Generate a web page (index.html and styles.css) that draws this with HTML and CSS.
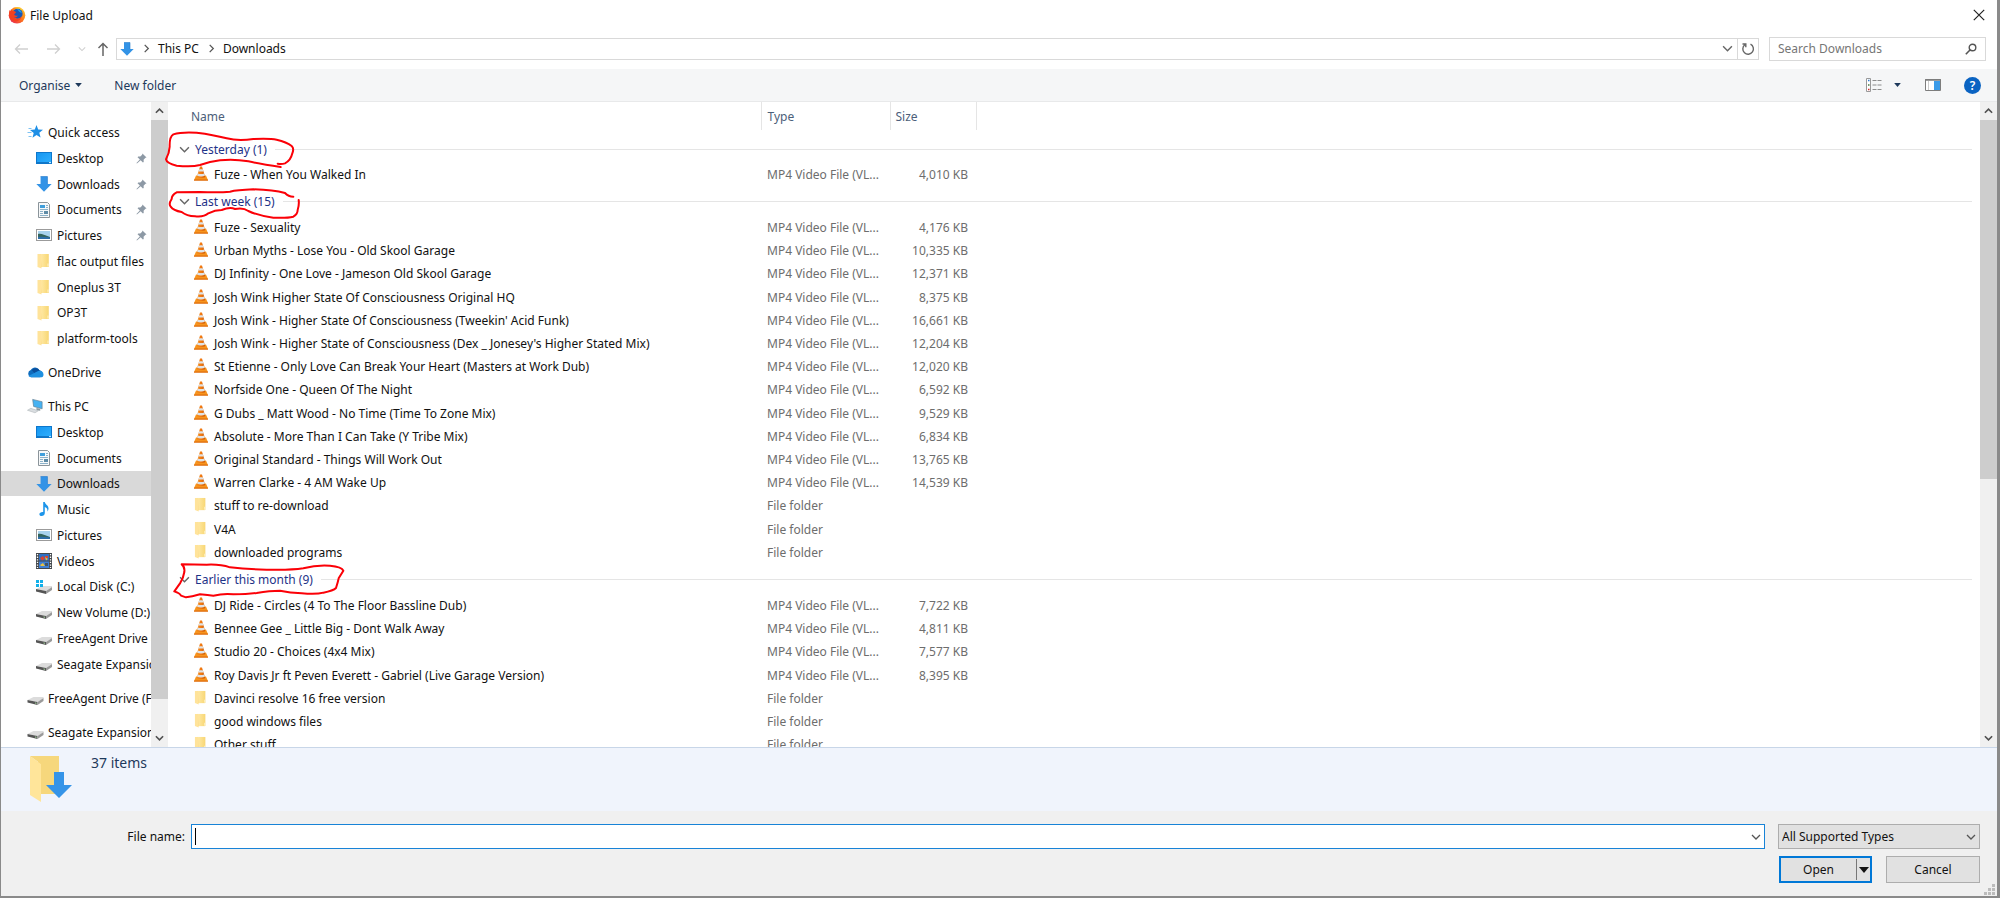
FILE: index.html
```html
<!DOCTYPE html>
<html lang="en">
<head>
    <meta charset="UTF-8">
    <title>File Upload</title>
    <link rel="stylesheet" href="styles.css">
</head>
<body>
    <!-- shared icons -->
    <svg class="sprite" width="0" height="0" aria-hidden="true">
        <defs>
            <linearGradient id="gFolder" x1="0" y1="0" x2="1" y2="0"><stop offset="0" stop-color="#ffe9a6"/><stop offset="1" stop-color="#f8d775"/></linearGradient>
            <linearGradient id="gCone" x1="0" y1="0" x2="1" y2="0"><stop offset="0" stop-color="#f08a1c"/><stop offset=".5" stop-color="#f47a10"/><stop offset="1" stop-color="#c95a08"/></linearGradient>
            <linearGradient id="gDesk" x1="0" y1="0" x2="1" y2="1"><stop offset="0" stop-color="#1595f0"/><stop offset="1" stop-color="#2fb0ff"/></linearGradient>
            <linearGradient id="gFox" x1="1" y1="0" x2="0" y2="1"><stop offset="0" stop-color="#ffd52e"/><stop offset=".45" stop-color="#ff7a1a"/><stop offset="1" stop-color="#e3175e"/></linearGradient>
        </defs>
        <symbol id="i-firefox" viewBox="0 0 18 18">
            <circle cx="9" cy="9.300" r="8.300" fill="url(#gFox)"/>
            <path d="M7 1.500c3-1 6.500.2 8 3.200-1.500-1-2.500-.8-3-.4z" fill="#ffcf2b"/>
            <circle cx="9.600" cy="7.800" r="5" fill="#1d57b5"/>
            <path d="M9 3c2.500.2 4.500 1.800 4.800 4.300L11 5.500z" fill="#21a0e8"/>
            <path d="M1.500 4l1.200 1.200 1-1.700.8 1.600c1.500-.4 3 .2 3.500 1.300L6.200 8.200c.2 1.500 1.800 1.700 3.600 1.200-.7 1.700-2.300 2.300-3.800 2 1.500 2 5.500 2 7.500-1.200-.3 3.500-4 6-7.500 5C2.200 14 0 10 1.500 4z" fill="#f5411f"/>
        </symbol>
        <symbol id="i-down" viewBox="0 0 14 14"><path d="M4 .5h6V7h3.700L7 13.700.3 7H4z" fill="#3393e6"/><path d="M4 .5h6V7" fill="none" stroke="#2a7dcb" stroke-width=".6"/></symbol>
        <symbol id="i-chev-down" viewBox="0 0 10 10"><path d="M1 3l4 4 4-4" fill="none" stroke="currentColor" stroke-width="1.300"/></symbol>
        <symbol id="i-chev-up" viewBox="0 0 10 10"><path d="M1 7l4-4 4 4" fill="none" stroke="currentColor" stroke-width="1.800"/></symbol>
        <symbol id="i-chev-right" viewBox="0 0 10 10"><path d="M3 1l4 4-4 4" fill="none" stroke="currentColor" stroke-width="1.400"/></symbol>
        <symbol id="i-tri" viewBox="0 0 10 6"><path d="M0 0h10L5 6z" fill="currentColor"/></symbol>
        <symbol id="i-star" viewBox="0 0 16 16"><path d="M9 1l1.700 4.500 4.800.2-3.700 3 1.300 4.800L9 11l-4 2.700 1.200-4.800L2.500 6l4.800-.4z" fill="#1e8fe6"/><path d="M1 4.500h3M0 8.500h4M1 12.500h3" stroke="#7cc2f3" stroke-width="1"/></symbol>
        <symbol id="i-desktop" viewBox="0 0 16 16"><rect x=".5" y="2.500" width="15" height="11" fill="url(#gDesk)" stroke="#0d77cc"/><path d="M1 12.600h12" stroke="#0a64b4" stroke-width=".8"/><path d="M13 12.600h2" stroke="#fff" stroke-width=".8"/></symbol>
        <symbol id="i-doc" viewBox="0 0 16 16"><path d="M2.500.5h9l2 2v13h-11z" fill="#f6f8f9" stroke="#8b949a"/><path d="M4 3h5v3H4z" fill="#3f9edb"/><path d="M10 3.500h2M10 5.500h2M4 7.500h8M4 9.500h3M4 11.500h3M4 13.500h8" stroke="#8bb1c9"/><path d="M8 9h4v3H8z" fill="#5d8ba6"/></symbol>
        <symbol id="i-pic" viewBox="0 0 16 16"><rect x=".5" y="2.500" width="15" height="11" fill="#fff" stroke="#9b9b9b"/><rect x="2" y="4" width="12" height="8" fill="#a9d3ee"/><path d="M2 7c3-1 6 1 12 3v2H2z" fill="#35655d"/><path d="M2 10c4-.6 8 0 12 .6V12H2z" fill="#2d6da8"/></symbol>
        <symbol id="i-folder" viewBox="1 0 15 16"><path d="M4 1h9v13H4z" fill="#f3cd66"/><path d="M5 1h8v13H6z" fill="url(#gFolder)"/><path d="M2 1h3l1 1.500v13L2 14z" fill="#ffe39a"/><path d="M12 10.500h1v3h-1z" fill="#fff4cc"/></symbol>
        <symbol id="i-cloud" viewBox="0 0 18 12"><path d="M4.500 11.500a4 4 0 0 1-.5-7.700A5.200 5.200 0 0 1 13 4a4 4 0 0 1 1 7.500z" fill="#0f6cbd"/><path d="M5 4a5 5 0 0 1 8.300.3L8.500 8z" fill="#0a4f9c"/><path d="M1.500 10.300L11.800 5a4 4 0 0 1 5.700 3.800 2.800 2.800 0 0 1-2.800 2.700H4.200a4 4 0 0 1-2.700-1.200z" fill="#1f90e0"/></symbol>
        <symbol id="i-pc" viewBox="0 0 18 16"><path d="M6 1l10 2.500V11L7 8.500z" fill="#46b2f2" stroke="#607d90" stroke-width=".7"/><path d="M10 10l4 1v2l-4-.6z" fill="#8d999f"/><path d="M.5 12.500L4 10.500l8 2.500-3.500 2.200z" fill="#d9dde0" stroke="#adb4b8" stroke-width=".6"/></symbol>
        <symbol id="i-music" viewBox="0 0 16 16"><path d="M7.200 1h1.600c.2 2.500 3.700 3 3.700 6.500 0 1.300-.6 2.300-1.200 3 .5-2.800-.8-4-2.500-4.600V12c0 1.800-1.500 3-3.200 3-1.400 0-2.200-.8-2.200-1.800C3.400 11.600 5.400 10.600 7.200 11z" fill="#1d95ea"/></symbol>
        <symbol id="i-video" viewBox="0 0 16 16"><path d="M0 0h16v16H0z" fill="#43484d"/><path d="M3 1h10v6.500H3z" fill="#2f6fc4"/><path d="M3 8.500h10V15H3z" fill="#3d7fd6"/><path d="M1.500 1v14M14.500 1v14" stroke="#fff" stroke-width="1.300" stroke-dasharray="1.300 1.300"/><path d="M4 5l3-2 2 3-3 1.500zM9 3h3v2H9z" fill="#d9442f"/><path d="M4 12l3-2 2 3H5zM9 4l3 2-2 1.500z" fill="#e7c243"/><path d="M9 10h3v3H9z" fill="#3f5568"/></symbol>
        <symbol id="i-drive" viewBox="0 0 16 16"><path d="M0 10l6-3h10v1l-6 4z" fill="#dcdcdc"/><path d="M0 10l10 2v3L0 12.500z" fill="#555"/><path d="M10 12l6-4v3l-6 4z" fill="#9a9a9a"/><path d="M7.500 13l1.500.3" stroke="#b9f7b0" stroke-width=".8"/></symbol>
        <symbol id="i-windrive" viewBox="0 0 16 16"><path d="M0 10l6-3h10v1l-6 4z" fill="#dcdcdc"/><path d="M0 10l10 2v3L0 12.500z" fill="#555"/><path d="M10 12l6-4v3l-6 4z" fill="#9a9a9a"/><path d="M0 1h3v3H0zM4 1h3v3H4zM0 5h3v3H0zM4 5h3v3H4z" fill="#12b0ea"/></symbol>
        <symbol id="i-pin" viewBox="0 0 12 12"><path d="M7 .5L11.500 5l-1.200.3-2 2.100.1 2.300-.9.6-2.400-2.400L1 11.500.5 11l3.700-4-2.500-2.500.7-.8 2.300.1 2-2z" fill="#8d99a5"/></symbol>
        <symbol id="i-cone" viewBox="0 0 14 15"><path d="M2 9.500h10l2 4.700H0z" fill="#f7941d"/><path d="M0 13.500h14v1.200H0z" fill="#dd6a0c"/><path d="M6 .5h2L11.200 11c-1.500 1.300-6.900 1.300-8.400 0z" fill="url(#gCone)"/><path d="M5.200 3.200h3.600l.7 2.300h-5z" fill="#dfe3e6"/><path d="M3.900 7.500c2 .7 4.200.7 6.200 0l.7 2.200c-2 1-5.600 1-7.600 0z" fill="#dfe3e6"/></symbol>
    </svg>

    <div class="dialog">
        <header class="titlebar">
            <svg class="logo"><use href="#i-firefox"/></svg>
            <span class="title">File Upload</span>
            <button class="plain close" aria-label="Close"><svg viewBox="0 0 12 12" width="12" height="12"><path d="M.8.8l10.400 10.400M11.200.8L.8 11.200" stroke="#222" stroke-width="1.200"/></svg></button>
        </header>

        <nav class="navbar">
            <div class="arrows">
                <button class="plain off" aria-label="Back"><svg viewBox="0 0 14 14" width="14" height="14"><path d="M14 7H1.500M6 2.500L1.500 7 6 11.500" fill="none" stroke="currentColor" stroke-width="1.300"/></svg></button>
                <button class="plain off" aria-label="Forward"><svg viewBox="0 0 14 14" width="14" height="14"><path d="M0 7h12.500M8 2.500L12.500 7 8 11.500" fill="none" stroke="currentColor" stroke-width="1.300"/></svg></button>
                <button class="plain off" aria-label="Recent locations"><svg width="8" height="8"><use href="#i-chev-down"/></svg></button>
                <button class="plain" aria-label="Up"><svg viewBox="0 0 12 14" width="12" height="14"><path d="M6 14V1.500M1.500 6L6 1.500 10.500 6" fill="none" stroke="currentColor" stroke-width="1.500"/></svg></button>
            </div>
            <div class="address">
                <svg width="14" height="14"><use href="#i-down"/></svg>
                <svg class="sep" width="9" height="9"><use href="#i-chev-right"/></svg>
                <a href="#">This PC</a>
                <svg class="sep" width="9" height="9"><use href="#i-chev-right"/></svg>
                <a href="#">Downloads</a>
                <button class="plain history" aria-label="Previous locations"><svg width="11" height="11"><use href="#i-chev-down"/></svg></button>
                <button class="plain refresh" aria-label="Refresh"><svg viewBox="0 0 14 14" width="14" height="14"><path d="M9.500 2.200A5.300 5.300 0 1 1 3.800 2.800M1.500 2h3.300v3.300" fill="none" stroke="currentColor" stroke-width="1.400"/></svg></button>
            </div>
            <div class="search">
                <input type="text" placeholder="Search Downloads" aria-label="Search Downloads">
                <svg viewBox="0 0 12 12" width="12" height="12"><circle cx="7.500" cy="4.500" r="3.300" fill="none" stroke="#555" stroke-width="1.400"/><path d="M5 7L.8 11.200" stroke="#555" stroke-width="1.600"/></svg>
            </div>
        </nav>

        <div class="toolbar">
            <button class="plain">Organise <svg width="7" height="4"><use href="#i-tri"/></svg></button>
            <button class="plain">New folder</button>
            <div class="views">
                <button class="plain" aria-label="View"><svg viewBox="0 0 16 14" width="16" height="14"><path d="M.5.500h4v13h-4z" fill="#fff" stroke="#999"/><path d="M2 2.500h1.500" stroke="#2c7bd0" stroke-width="1.500"/><path d="M2 7h1.500" stroke="#467a3c" stroke-width="1.500"/><path d="M2 11.500h1.500" stroke="#d02c2c" stroke-width="1.500"/><path d="M6.500 2.500h4M11.500 2.500h4M6.500 7h4M11.500 7h4M6.500 11.500h4M11.500 11.500h4" stroke="#8c8c8c"/></svg></button>
                <button class="plain" aria-label="More views"><svg width="7" height="4"><use href="#i-tri"/></svg></button>
                <button class="plain" aria-label="Preview pane"><svg viewBox="0 0 16 12" width="16" height="12"><path d="M.5.500h15v11H.500z" fill="#fff" stroke="#7d7d7d"/><path d="M0 1h16" stroke="#7d7d7d" stroke-width="1.500"/><path d="M9 2h6v9H9z" fill="#3c9be8"/><path d="M3.500 2v9" stroke="#ccc"/></svg></button>
                <button class="plain help" aria-label="Help">?</button>
            </div>
        </div>

        <main class="browser">
            <aside class="sidebar">
                <div class="tree">
                    <ul>
                        <li class="root"><svg><use href="#i-star"/></svg>Quick access</li>
                        <li><svg><use href="#i-desktop"/></svg>Desktop<svg class="pin"><use href="#i-pin"/></svg></li>
                        <li><svg><use href="#i-down"/></svg>Downloads<svg class="pin"><use href="#i-pin"/></svg></li>
                        <li><svg><use href="#i-doc"/></svg>Documents<svg class="pin"><use href="#i-pin"/></svg></li>
                        <li><svg><use href="#i-pic"/></svg>Pictures<svg class="pin"><use href="#i-pin"/></svg></li>
                        <li><svg><use href="#i-folder"/></svg>flac output files</li>
                        <li><svg><use href="#i-folder"/></svg>Oneplus 3T</li>
                        <li><svg><use href="#i-folder"/></svg>OP3T</li>
                        <li><svg><use href="#i-folder"/></svg>platform-tools</li>
                    </ul>
                    <ul>
                        <li class="root"><svg><use href="#i-cloud"/></svg>OneDrive</li>
                    </ul>
                    <ul>
                        <li class="root"><svg><use href="#i-pc"/></svg>This PC</li>
                        <li><svg><use href="#i-desktop"/></svg>Desktop</li>
                        <li><svg><use href="#i-doc"/></svg>Documents</li>
                        <li class="selected"><svg><use href="#i-down"/></svg>Downloads</li>
                        <li><svg><use href="#i-music"/></svg>Music</li>
                        <li><svg><use href="#i-pic"/></svg>Pictures</li>
                        <li><svg><use href="#i-video"/></svg>Videos</li>
                        <li><svg><use href="#i-windrive"/></svg>Local Disk (C:)</li>
                        <li><svg><use href="#i-drive"/></svg>New Volume (D:)</li>
                        <li><svg><use href="#i-drive"/></svg>FreeAgent Drive (F:)</li>
                        <li><svg><use href="#i-drive"/></svg>Seagate Expansion Drive (E:)</li>
                    </ul>
                    <ul>
                        <li class="root"><svg><use href="#i-drive"/></svg>FreeAgent Drive (F:)</li>
                    </ul>
                    <ul>
                        <li class="root"><svg><use href="#i-drive"/></svg>Seagate Expansion Drive (E:)</li>
                    </ul>
                </div>
                <div class="scrollbar">
                    <svg><use href="#i-chev-up"/></svg>
                    <div class="track"><div class="thumb thumb-tree"></div></div>
                    <svg class="flip"><use href="#i-chev-up"/></svg>
                </div>
            </aside>

            <section class="files">
                <div class="list">
                    <table>
                        <colgroup><col class="c-name"><col class="c-type"><col class="c-size"><col></colgroup>
                        <thead>
                            <tr><th>Name</th><th>Type</th><th>Size</th><th></th></tr>
                        </thead>
                        <tbody>
                            <tr class="group"><th colspan="4"><div><svg><use href="#i-chev-down"/></svg>Yesterday (1)</div></th></tr>
                            <tr><td><svg><use href="#i-cone"/></svg>Fuze - When You Walked In</td><td>MP4 Video File (VL...</td><td>4,010 KB</td></tr>
                        </tbody>
                        <tbody>
                            <tr class="group"><th colspan="4"><div><svg><use href="#i-chev-down"/></svg>Last week (15)</div></th></tr>
                            <tr><td><svg><use href="#i-cone"/></svg>Fuze - Sexuality</td><td>MP4 Video File (VL...</td><td>4,176 KB</td></tr>
                            <tr><td><svg><use href="#i-cone"/></svg>Urban Myths - Lose You - Old Skool Garage</td><td>MP4 Video File (VL...</td><td>10,335 KB</td></tr>
                            <tr><td><svg><use href="#i-cone"/></svg>DJ Infinity - One Love - Jameson Old Skool Garage</td><td>MP4 Video File (VL...</td><td>12,371 KB</td></tr>
                            <tr><td><svg><use href="#i-cone"/></svg>Josh Wink Higher State Of Consciousness Original HQ</td><td>MP4 Video File (VL...</td><td>8,375 KB</td></tr>
                            <tr><td><svg><use href="#i-cone"/></svg>Josh Wink - Higher State Of Consciousness (Tweekin' Acid Funk)</td><td>MP4 Video File (VL...</td><td>16,661 KB</td></tr>
                            <tr><td><svg><use href="#i-cone"/></svg>Josh Wink - Higher State of Consciousness (Dex _ Jonesey's Higher Stated Mix)</td><td>MP4 Video File (VL...</td><td>12,204 KB</td></tr>
                            <tr><td><svg><use href="#i-cone"/></svg>St Etienne - Only Love Can Break Your Heart (Masters at Work Dub)</td><td>MP4 Video File (VL...</td><td>12,020 KB</td></tr>
                            <tr><td><svg><use href="#i-cone"/></svg>Norfside One - Queen Of The Night</td><td>MP4 Video File (VL...</td><td>6,592 KB</td></tr>
                            <tr><td><svg><use href="#i-cone"/></svg>G Dubs _ Matt Wood - No Time (Time To Zone Mix)</td><td>MP4 Video File (VL...</td><td>9,529 KB</td></tr>
                            <tr><td><svg><use href="#i-cone"/></svg>Absolute - More Than I Can Take (Y Tribe Mix)</td><td>MP4 Video File (VL...</td><td>6,834 KB</td></tr>
                            <tr><td><svg><use href="#i-cone"/></svg>Original Standard - Things Will Work Out</td><td>MP4 Video File (VL...</td><td>13,765 KB</td></tr>
                            <tr><td><svg><use href="#i-cone"/></svg>Warren Clarke - 4 AM Wake Up</td><td>MP4 Video File (VL...</td><td>14,539 KB</td></tr>
                            <tr><td><svg><use href="#i-folder"/></svg>stuff to re-download</td><td>File folder</td><td></td></tr>
                            <tr><td><svg><use href="#i-folder"/></svg>V4A</td><td>File folder</td><td></td></tr>
                            <tr><td><svg><use href="#i-folder"/></svg>downloaded programs</td><td>File folder</td><td></td></tr>
                        </tbody>
                        <tbody>
                            <tr class="group"><th colspan="4"><div><svg><use href="#i-chev-down"/></svg>Earlier this month (9)</div></th></tr>
                            <tr><td><svg><use href="#i-cone"/></svg>DJ Ride - Circles (4 To The Floor Bassline Dub)</td><td>MP4 Video File (VL...</td><td>7,722 KB</td></tr>
                            <tr><td><svg><use href="#i-cone"/></svg>Bennee Gee _ Little Big - Dont Walk Away</td><td>MP4 Video File (VL...</td><td>4,811 KB</td></tr>
                            <tr><td><svg><use href="#i-cone"/></svg>Studio 20 - Choices (4x4 Mix)</td><td>MP4 Video File (VL...</td><td>7,577 KB</td></tr>
                            <tr><td><svg><use href="#i-cone"/></svg>Roy Davis Jr ft Peven Everett - Gabriel (Live Garage Version)</td><td>MP4 Video File (VL...</td><td>8,395 KB</td></tr>
                            <tr><td><svg><use href="#i-folder"/></svg>Davinci resolve 16 free version</td><td>File folder</td><td></td></tr>
                            <tr><td><svg><use href="#i-folder"/></svg>good windows files</td><td>File folder</td><td></td></tr>
                            <tr><td><svg><use href="#i-folder"/></svg>Other stuff</td><td>File folder</td><td></td></tr>
                        </tbody>
                    </table>
                </div>
                <div class="scrollbar">
                    <svg><use href="#i-chev-up"/></svg>
                    <div class="track"><div class="thumb thumb-list"></div></div>
                    <svg class="flip"><use href="#i-chev-up"/></svg>
                </div>
            </section>
        </main>

        <div class="details">
            <svg viewBox="0 0 42 48" width="42" height="48"><path d="M8 1h21v38H8z" fill="#f0cc68"/><path d="M29 1v38H11V9L0 1z" fill="#f6d77c"/><path d="M0 1l11 8v38L0 40z" fill="#ffe59a"/><path d="M24 17h10v13h8L29 43 16 30h8z" fill="#3594e8"/></svg>
            <span>37 items</span>
        </div>

        <form class="footer" onsubmit="return false">
            <label for="filename">File name:</label>
            <div class="filename">
                <input type="text" id="filename">
                <svg><use href="#i-chev-down"/></svg>
            </div>
            <div class="filetype">
                <select aria-label="File type"><option>All Supported Types</option></select>
                <svg><use href="#i-chev-down"/></svg>
            </div>
            <div class="buttons">
                <div class="split">
                    <button class="open">Open</button>
                    <button class="more" aria-label="Open options"><svg width="10" height="6"><use href="#i-tri"/></svg></button>
                </div>
                <button class="cancel">Cancel</button>
            </div>
        </form>
        <svg class="grip" viewBox="0 0 11 11" width="11" height="11"><path d="M8 0h3v3H8zM4 4h3v3H4zM8 4h3v3H8zM0 8h3v3H0zM4 8h3v3H4zM8 8h3v3H8z" fill="#bcbcbc"/></svg>

        <!-- red pen circles round the group names -->
        <svg class="pen" viewBox="0 0 1200 1860" width="400" height="620">
            <path d="M842 501Q780 492 745 484Q700 476 660 481Q630 485 600 495Q575 502 530 497Q500 490 498 478Q508 460 509 440Q508 410 520 403Q545 395 590 398Q640 404 680 415Q715 424 760 417Q810 415 830 419Q860 426 875 438Q883 445 877 460Q872 482 855 490Q845 493 833 491"/>
            <path d="M880 590Q865 590 855 579Q820 570 760 568Q710 570 690 575Q660 578 600 576L530 577Q515 585 515 597Q505 612 512 620Q520 632 545 636Q560 648 585 649Q612 652 625 640Q645 630 665 630Q690 620 705 627Q730 622 745 633Q775 647 820 653Q860 655 880 650Q893 642 893 630Q898 615 896 600"/>
            <path d="M545 1693Q555 1700 553 1716Q550 1735 540 1750L523 1774Q540 1780 543 1787L558 1792Q575 1790 600 1783Q625 1785 640 1787Q670 1780 700 1783Q740 1783 770 1779Q810 1772 840 1772Q870 1778 905 1780Q950 1784 970 1778Q1000 1772 1008 1764Q1014 1745 1016 1735L1030 1712Q1025 1700 990 1697Q950 1694 910 1705Q870 1711 800 1709Q740 1708 690 1702Q660 1692 620 1694Z"/>
        </svg>
    </div>
</body>
</html>
```
FILE: styles.css
```css
* { box-sizing: border-box; }
body { margin: 0; font-family: "Noto Sans", "Open Sans", sans-serif; font-size: 12px; color: #111; background-color: #fff; }
button, input, select { font: inherit; color: inherit; }
ul { list-style: none; margin: 0; padding: 0; }
svg { display: block; flex: none; }
.sprite { position: absolute; }
.plain { display: flex; align-items: center; border: 0; padding: 0; background: none; }

.dialog { position: relative; display: flex; flex-direction: column; height: 100vh; overflow: hidden; border: 1px solid #8a8a8a; border-width: 0 3px 2px 1px; }

.titlebar { display: flex; align-items: center; height: 30px; padding: 0 12px 0 7px; }
.logo { width: 18px; height: 18px; }
.title { margin-left: 4px; }
.close { margin-left: auto; }

.navbar { display: flex; align-items: center; gap: 10px; height: 39px; padding: 0 11px 2px 13px; }
.arrows { display: flex; align-items: center; gap: 17px; width: 92px; color: #666; }
.arrows .plain:nth-child(2) { margin-left: 2px; }
.arrows .plain:nth-child(4) { margin-left: -6px; }
.off { color: #cfcfcf; }
.address { display: flex; flex: 1; align-items: center; height: 22px; padding-left: 3px; border: 1px solid #d9d9d9; }
.address a { color: inherit; text-decoration: none; }
.sep { margin: 0 7px 0 8px; color: #555; }
.history { margin-left: auto; padding-right: 4px; color: #666; }
.refresh { height: 20px; padding: 0 3px; border-left: 1px solid #d9d9d9; color: #666; }
.search { display: flex; align-items: center; width: 217px; height: 24px; padding: 0 8px; border: 1px solid #d9d9d9; }
.search input { flex: 1; min-width: 0; border: 0; padding: 0; outline: 0; background: none; }
.search input::placeholder { color: #767676; opacity: 1; }

.toolbar { display: flex; align-items: center; gap: 32px; height: 33px; padding: 0 16px 0 18px; background-color: #f5f6f7; border-bottom: 1px solid #e8e9ea; color: #1e395b; }
.toolbar .plain { gap: 5px; }
.views { display: flex; align-items: center; margin-left: auto; }
.views .plain:nth-child(2) { margin-left: 12px; }
.views .plain:nth-child(3) { margin-left: 24px; }
.toolbar .help { justify-content: center; width: 17px; height: 17px; margin-left: 23px; border-radius: 50%; background-color: #0a63c2; color: #fff; font-weight: 600; }

.browser { display: flex; flex: 1; min-height: 0; }
.sidebar { display: flex; width: 167px; }
.tree { flex: 1; min-width: 0; overflow: hidden; padding-top: 17px; }
.tree ul { margin-bottom: 8px; }
.tree li { display: flex; align-items: center; gap: 5px; height: 26px; padding-left: 35px; white-space: nowrap; overflow: hidden; }
.tree li:nth-child(4n) { height: 25px; }
.tree li svg { width: 16px; height: 16px; }
.tree li.root { gap: 4px; padding-left: 26px; }
.tree li.root svg { width: 17px; }
.tree li .pin { width: 11px; height: 11px; margin: 0 4px 0 auto; }
.selected { background-color: #d9d9d9; }

.scrollbar { display: flex; flex-direction: column; width: 17px; background-color: #f0f0f0; color: #505050; }
.scrollbar > svg { width: 9px; height: 18px; margin: 0 auto; }
.track { flex: 1; }
.thumb { background-color: #cdcdcd; }
.thumb-tree { height: 95%; }
.thumb-list { height: 59%; }
.flip { transform: rotate(180deg); }

.files { display: flex; flex: 1; min-width: 0; }
.list { flex: 1; min-width: 0; overflow: hidden; padding: 0 8px 0 22px; }
table { width: 100%; table-layout: fixed; border-collapse: collapse; }
.c-name { width: 571px; }
.c-type { width: 129px; }
.c-size { width: 86px; }
th, td { padding: 0; font-weight: normal; text-align: left; white-space: nowrap; }
thead th { height: 28px; padding-left: 6px; border-right: 1px solid #e5e5e5; color: #4c607a; }
thead th:first-child { padding-left: 1px; }
thead th:last-child { border-right: 0; }
thead th:nth-child(3) { padding-left: 5px; }
tbody tr { height: 23px; }
tbody tr:nth-child(5n) { height: 24px; }
.group th { height: 30px; color: #1e3287; }
thead + tbody .group th { height: 33px; padding-top: 5px; }
.group div { display: flex; align-items: center; }
.group div::after { content: ""; flex: 1; height: 1px; margin-left: 8px; background-color: #e5e5e5; }
.group svg { width: 11px; height: 11px; margin: 0 5px 0 -11px; color: #666; }
td svg { float: left; width: 14px; height: 15px; margin: 0 6px 0 4px; }
td:nth-child(n+2) { padding-left: 6px; color: #6d6d6d; }
td:nth-child(3) { padding: 0 8px 0 0; text-align: right; }

.details { display: flex; gap: 19px; height: 64px; padding: 7px 0 0 29px; border-top: 1px solid #c8d6e8; background-color: #f0f4fc; color: #1e395b; font-size: 14px; line-height: 16px; }

.footer { display: grid; grid-template-columns: 185px 1fr 202px; gap: 7px 0; height: 85px; padding: 13px 17px 12px 0; background-color: #f0f0f0; align-content: start; }
.footer label { padding-right: 1px; text-align: right; line-height: 25px; }
.filename, .filetype { position: relative; }
.filename { margin: 0 13px 0 5px; }
.filename::before { content: ""; position: absolute; left: 4px; top: 4px; width: 1px; height: 17px; background-color: #000; }
.filename input { display: block; width: 100%; height: 25px; padding: 0 24px 0 3px; border: 1px solid #1883d7; outline: 0; background-color: #fff; }
.filetype select { display: block; width: 100%; height: 25px; padding: 0 3px; border: 1px solid #adadad; border-radius: 0; background-color: #e1e1e1; appearance: none; }
.filename svg, .filetype svg { position: absolute; right: 4px; top: 8px; width: 10px; height: 10px; color: #555; pointer-events: none; }
.buttons { grid-column: 3; display: flex; justify-content: space-between; padding-left: 1px; }
.split { display: flex; width: 93px; height: 27px; border: 2px solid #0078d7; background-color: #e1e1e1; }
.split button { border: 0; padding: 0; background: none; }
.open { flex: 1; }
.more { display: flex; align-items: center; justify-content: center; width: 14px; margin: 1px 0; }
.split .more { border-left: 1px solid #777; }
.cancel { width: 94px; height: 27px; padding: 0; border: 1px solid #adadad; background-color: #e1e1e1; }
.grip { position: absolute; right: 2px; bottom: 1px; }

.pen { position: absolute; left: -1px; top: 0; fill: none; stroke: #fb0007; stroke-width: 6; stroke-linecap: round; stroke-linejoin: round; pointer-events: none; }
```
